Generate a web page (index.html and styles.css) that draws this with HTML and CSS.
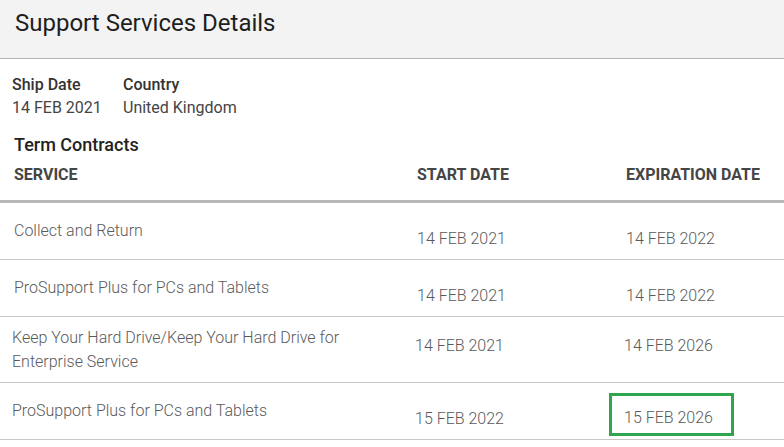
FILE: index.html
```html
<!DOCTYPE html>
<html lang="en">
<head>
<meta charset="utf-8">
<title>Support Services Details</title>
<link rel="stylesheet" href="styles.css">
</head>
<body>
<div class="panel">
  <header class="panel__header">
    <h1 class="panel__title">Support Services Details</h1>
  </header>
  <section class="meta">
    <div class="meta__item meta__item--ship">
      <div class="meta__label">Ship Date</div>
      <div class="meta__value">14 FEB 2021</div>
    </div>
    <div class="meta__item">
      <div class="meta__label">Country</div>
      <div class="meta__value">United Kingdom</div>
    </div>
  </section>
  <h2 class="section-title">Term Contracts</h2>
  <div class="table">
    <div class="table__head">
      <div class="th">SERVICE</div>
      <div class="th">START DATE</div>
      <div class="th">EXPIRATION DATE</div>
    </div>
    <div class="row">
      <div class="cell cell--service">Collect and Return</div>
      <div class="cell cell--date">14 FEB 2021</div>
      <div class="cell cell--date">14 FEB 2022</div>
    </div>
    <div class="row">
      <div class="cell cell--service">ProSupport Plus for PCs and Tablets</div>
      <div class="cell cell--date">14 FEB 2021</div>
      <div class="cell cell--date">14 FEB 2022</div>
    </div>
    <div class="row row--inset row--tall">
      <div class="cell cell--service">Keep Your Hard Drive/Keep Your Hard Drive for Enterprise Service</div>
      <div class="cell cell--date">14 FEB 2021</div>
      <div class="cell cell--date">14 FEB 2026</div>
    </div>
    <div class="row row--inset">
      <div class="cell cell--service">ProSupport Plus for PCs and Tablets</div>
      <div class="cell cell--date">15 FEB 2022</div>
      <div class="cell cell--flagged"><span class="highlight">15 FEB 2026</span></div>
    </div>
  </div>
</div>
</body>
</html>
```

FILE: styles.css
```css
* { box-sizing: border-box; }

body {
  margin: 0;
  background: #ffffff;
  font-family: Roboto, "Liberation Sans", Arial, sans-serif;
  color: #333;
}

.panel { width: 784px; }

.panel__header {
  height: 59px;
  background: #f3f3f3;
  border-bottom: 1px solid #b3b3b3;
  padding: 8px 0 0 15px;
}

.panel__title {
  margin: 0;
  font-size: 24px;
  line-height: 30px;
  font-weight: 400;
  color: #1e1e1e;
}

.meta {
  display: flex;
  padding: 15px 0 0 12px;
}

.meta__item--ship { width: 111px; }

.meta__label {
  font-size: 16px;
  line-height: 22px;
  font-weight: 500;
  color: #333;
}

.meta__value {
  font-size: 16px;
  line-height: 23px;
  font-weight: 400;
  color: #444;
}

.section-title {
  margin: 15px 0 0 14px;
  font-size: 18px;
  line-height: 22px;
  font-weight: 500;
  color: #222;
}

.table__head,
.row {
  display: grid;
  grid-template-columns: 403px 209px 1fr;
  align-items: start;
}

.table__head {
  padding: 9px 0 15px;
  border-bottom: 3px solid #b7b7b7;
}

.th {
  padding-left: 14px;
  font-size: 16px;
  line-height: 20px;
  font-weight: 700;
  color: #454545;
}

.row {
  border-bottom: 1px solid #c8c8c8;
  height: 57px;
}

.cell {
  padding-left: 14px;
  font-size: 16px;
  line-height: 24px;
  font-weight: 300;
  color: #5a5a5a;
}

.cell--service { padding-top: 16px; padding-right: 30px; }
.cell--date { padding-top: 24px; }
.cell--flagged { padding-top: 10px; }

.row--inset .cell { padding-left: 12px; }
.row--tall { height: 66px; }
.row--tall .cell--service { padding-top: 9px; }
.row--tall .cell--date { padding-top: 17px; }

.highlight {
  display: inline-block;
  margin-left: -15px;
  padding: 10px 18px 3px 12px;
  border: 3px solid #2fa64e;
}
```
